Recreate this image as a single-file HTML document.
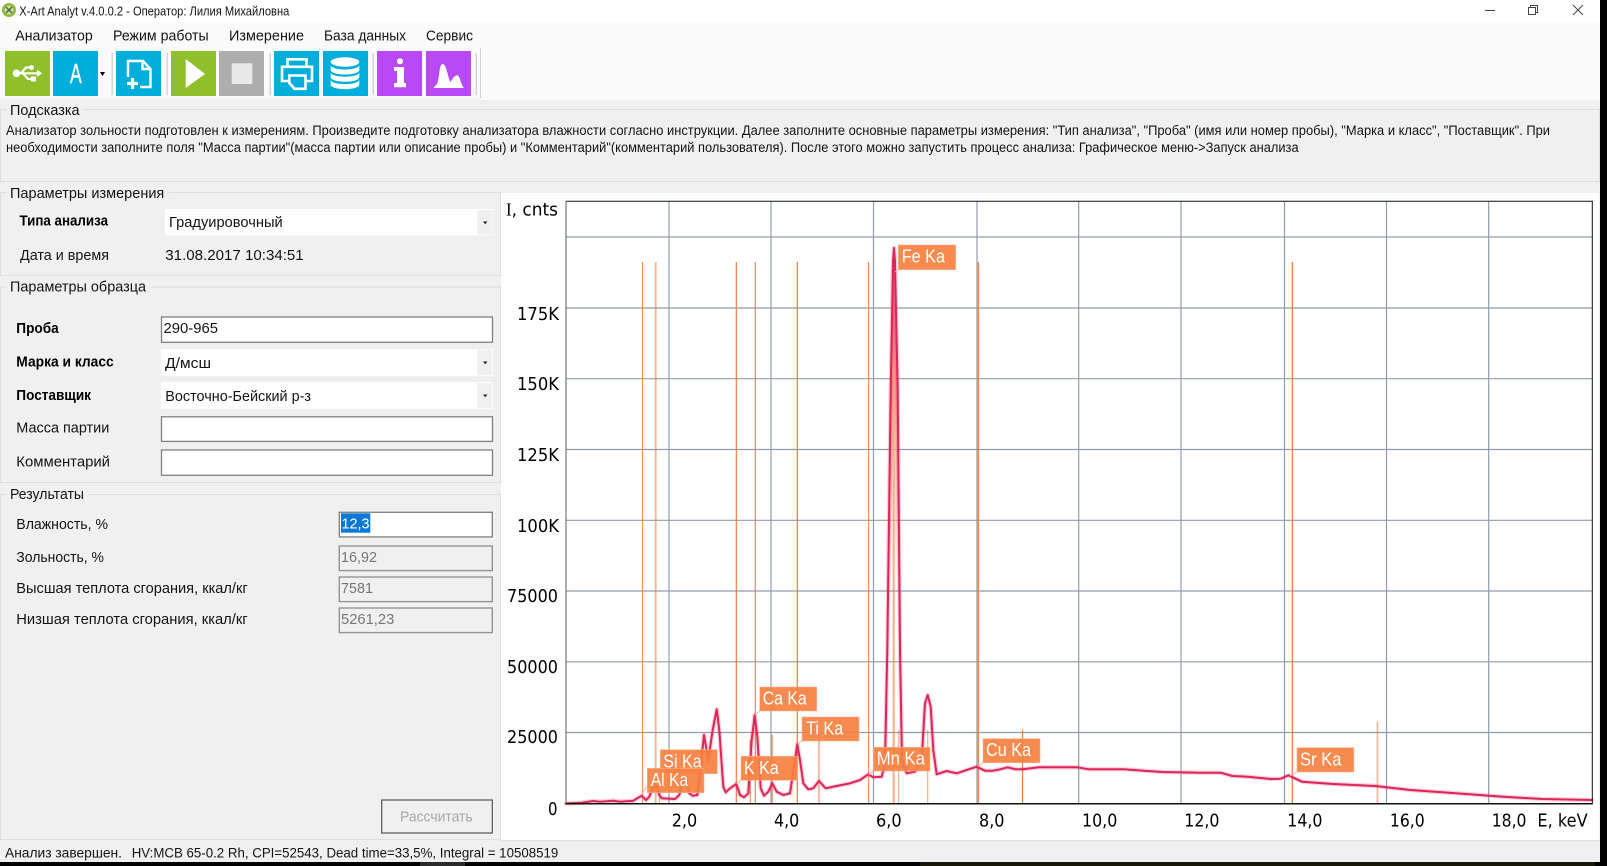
<!DOCTYPE html>
<html lang="ru">
<head>
<meta charset="utf-8">
<title>X-Art Analyt</title>
<style>
html,body{margin:0;padding:0;width:1607px;height:866px;background:#000;overflow:hidden}
svg{display:block;filter:blur(.35px)}
text{font-family:"Liberation Sans","Noto Sans CJK SC",sans-serif;font-size:14.5px;fill:#141414}
.s{font-size:13.5px;fill:#141414}
.b{font-weight:bold;font-size:14.5px;fill:#000}
.d{fill:#777}
.c{font-family:"DejaVu Sans",sans-serif;font-size:17.5px;fill:#000}
.l{font-size:18px;fill:#fff}
.grid line{stroke:#8f9cae;stroke-width:1.2}
.ol line{stroke:#f2783c;stroke-width:1.2}
.gb{fill:#f0f0f0;stroke:#dedede;stroke-width:1}
.lab rect{fill:#f6803f;fill-opacity:.92;stroke:#fbb48e;stroke-width:.6}
.con line{stroke:#fbb48e;stroke-width:1}
.w{fill:#fff;stroke:#808080;stroke-width:1.3}
.dis{fill:#f0f0f0;stroke:#949494;stroke-width:1.4}
</style>
</head>
<body>
<svg xmlns="http://www.w3.org/2000/svg" width="1607" height="866" viewBox="0 0 1607 866">
<defs>
<linearGradient id="fe" gradientUnits="userSpaceOnUse" x1="0" y1="248" x2="0" y2="600">
<stop offset="0" stop-color="#e8507a"/>
<stop offset=".45" stop-color="#f4a98a"/>
<stop offset="1" stop-color="#f7c8b0" stop-opacity="0"/>
</linearGradient>
</defs>
<rect width="1607" height="866" fill="#000"/>
<rect x="920" y="862" width="675" height="4" fill="#171708"/>
<rect x="420" y="862" width="45" height="4" fill="#2b2b2b"/>
<rect x="0" y="0" width="1600" height="862" fill="#f0f0f0"/>

<!-- title bar -->
<rect x="0" y="0" width="1600" height="22" fill="#fff"/>
<circle cx="9" cy="10" r="7" fill="#8dbb3c"/>
<circle cx="9" cy="10" r="4.4" fill="#cfdcb8"/>
<path d="M6 7L12 13M12 7L6 13" stroke="#4c6d2a" stroke-width="1.5"/>
<text x="19.3" y="15.5" style="font-size:12.5px" textLength="270" lengthAdjust="spacingAndGlyphs">X-Art Analyt v.4.0.0.2 - Оператор: Лилия Михайловна</text>
<path d="M1485 10.5H1495" stroke="#444" stroke-width="1"/>
<path d="M1528.5 7.5h7v7h-7zM1530.5 7.5v-2h7v7h-2" fill="none" stroke="#444" stroke-width="1"/>
<path d="M1573 5L1583 15M1583 5L1573 15" stroke="#444" stroke-width="1"/>

<!-- menu + toolbar bg -->
<rect x="0" y="22" width="1600" height="78" fill="#fafafa"/>
<rect x="480" y="48" width="1" height="50" fill="#d2d2d2"/>
<rect x="0" y="98" width="480" height="2" fill="#f3f3f3"/>
<text x="15.3" y="40.7" textLength="77.4" lengthAdjust="spacingAndGlyphs">Анализатор</text>
<text x="113" y="40.7" textLength="95.7" lengthAdjust="spacingAndGlyphs">Режим работы</text>
<text x="229" y="40.7" textLength="75" lengthAdjust="spacingAndGlyphs">Измерение</text>
<text x="324" y="40.7" textLength="82" lengthAdjust="spacingAndGlyphs">База данных</text>
<text x="426" y="40.7" textLength="47" lengthAdjust="spacingAndGlyphs">Сервис</text>

<!-- toolbar -->
<g>
<rect x="5" y="51" width="45" height="45" fill="#8fbf2b"/>
<rect x="53" y="51" width="45" height="45" fill="#00aedb"/>
<rect x="116" y="51" width="45" height="45" fill="#00aedb"/>
<rect x="171" y="51" width="45" height="45" fill="#8fbf2b"/>
<rect x="219" y="51" width="45" height="45" fill="#adadad"/>
<rect x="274" y="51" width="45" height="45" fill="#00aedb"/>
<rect x="323" y="51" width="45" height="45" fill="#00aedb"/>
<rect x="377" y="51" width="45" height="45" fill="#b948f6"/>
<rect x="426" y="51" width="45" height="45" fill="#b948f6"/>
<g fill="#d6d6d6">
<rect x="111.5" y="53" width="1.5" height="42"/>
<rect x="166.5" y="53" width="1.5" height="42"/>
<rect x="269.5" y="53" width="1.5" height="42"/>
<rect x="372.5" y="53" width="1.5" height="42"/>
<rect x="475.5" y="53" width="1.5" height="42"/>
</g>
<!-- usb -->
<g fill="#fff" stroke="none">
<circle cx="16.5" cy="73.3" r="3.8"/>
<path d="M37 69.6L42 73.3L37 77Z"/>
<circle cx="31.5" cy="67.5" r="2.4"/>
<rect x="31" y="76.5" width="5" height="5"/>
</g>
<path d="M16 73.3H38M21 73.3L26 67.5H30M23 73.3L28 79H32" fill="none" stroke="#fff" stroke-width="2.2"/>
<text x="70" y="83" style="font-size:28px;fill:#fff;stroke:#fff;stroke-width:.5" textLength="11.7" lengthAdjust="spacingAndGlyphs">A</text>
<path d="M100 72H105L102.5 76Z" fill="#000"/>
<!-- new doc -->
<path d="M128 77V61H143L150.5 69V87H140M142.5 61V69H150.5" fill="none" stroke="#fff" stroke-width="2.4"/>
<path d="M127 83.5H138M132.5 78V89" fill="none" stroke="#fff" stroke-width="3.2"/>
<!-- play/stop -->
<path d="M185.7 59L205 74L185.7 88Z" fill="#fff"/>
<rect x="231.7" y="63.3" width="20.6" height="20.7" fill="#e8e8e8"/>
<!-- printer -->
<path d="M287.5 66V59.3H306.5V66M288 81H282V66.8H312V81H306M289.3 75.5H305.5V88.8H294.5L289.3 83Z" fill="none" stroke="#fff" stroke-width="2.6"/>
<!-- database -->
<g fill="#fff">
<ellipse cx="345" cy="62" rx="14.3" ry="4.8"/>
<path d="M330.7 65c0 2.5 6 4.5 14.3 4.5s14.3-2 14.3-4.5v5c0 2.5-6 4.5-14.3 4.5s-14.3-2-14.3-4.5z"/>
<path d="M330.7 72.3c0 2.5 6 4.5 14.3 4.5s14.3-2 14.3-4.5v5c0 2.5-6 4.5-14.3 4.5s-14.3-2-14.3-4.5z"/>
<path d="M330.7 79.6c0 2.5 6 4.5 14.3 4.5s14.3-2 14.3-4.5v5c0 2.5-6 4.5-14.3 4.5s-14.3-2-14.3-4.5z"/>
</g>
<!-- info -->
<circle cx="400" cy="61.3" r="3" fill="#fff"/>
<path d="M394 67H404V83H406V87.3H394V83H397V71H394Z" fill="#fff"/>
<!-- peaks -->
<path d="M433.3 88L437 84C439.5 79 439 64 442.5 64C447 64 447.5 78 450.7 82C452.5 78.5 455 75.3 457.3 75.3C460 75.3 460.5 84 464 88Z" fill="#fff"/>
</g>

<!-- hint -->
<rect x="0.5" y="109.5" width="1599" height="72" class="gb"/>
<rect x="6" y="105" width="77" height="8" fill="#f0f0f0"/>
<text x="10" y="115" textLength="69.5" lengthAdjust="spacingAndGlyphs">Подсказка</text>
<text class="s" x="6" y="135" textLength="1544" lengthAdjust="spacingAndGlyphs">Анализатор зольности подготовлен к измерениям. Произведите подготовку анализатора влажности согласно инструкции. Далее заполните основные параметры измерения: "Тип анализа", "Проба" (имя или номер пробы), "Марка и класс", "Поставщик". При</text>
<text class="s" x="6" y="152" textLength="1292.6" lengthAdjust="spacingAndGlyphs">необходимости заполните поля "Масса партии"(масса партии или описание пробы) и "Комментарий"(комментарий пользователя). После этого можно запустить процесс анализа: Графическое меню-&gt;Запуск анализа</text>

<!-- group 1 -->
<rect x="0.5" y="192.5" width="500" height="83" class="gb"/>
<rect x="6" y="188" width="163" height="8" fill="#f0f0f0"/>
<text x="10" y="198" textLength="154.3" lengthAdjust="spacingAndGlyphs">Параметры измерения</text>
<text class="b" x="19.5" y="225.7" textLength="88.5" lengthAdjust="spacingAndGlyphs">Типа анализа</text>
<rect x="165" y="209" width="327.7" height="26.3" fill="#fff"/>
<rect x="477.3" y="209.8" width="15" height="24.8" fill="#f0f0f0"/>
<path d="M483 221.5H487.5L485.2 224.2Z" fill="#222"/>
<text x="169" y="227" textLength="113.7" lengthAdjust="spacingAndGlyphs">Градуировочный</text>
<text x="20" y="260" textLength="89" lengthAdjust="spacingAndGlyphs">Дата и время</text>
<text x="165.3" y="260" textLength="138.4" lengthAdjust="spacingAndGlyphs">31.08.2017 10:34:51</text>

<!-- group 2 -->
<rect x="0.5" y="287" width="500" height="195.5" class="gb"/>
<rect x="6" y="283" width="144" height="8" fill="#f0f0f0"/>
<text x="10" y="291.7" textLength="136" lengthAdjust="spacingAndGlyphs">Параметры образца</text>
<text class="b" x="16.3" y="333" textLength="42.4" lengthAdjust="spacingAndGlyphs">Проба</text>
<rect x="161.5" y="317" width="331" height="25.3" class="w"/>
<text x="163.5" y="333" textLength="54.5" lengthAdjust="spacingAndGlyphs">290-965</text>
<text class="b" x="16.3" y="366.7" textLength="97.4" lengthAdjust="spacingAndGlyphs">Марка и класс</text>
<rect x="161" y="349.3" width="332" height="26.7" fill="#fff"/>
<rect x="477.3" y="350" width="15" height="25.3" fill="#f0f0f0"/>
<path d="M483 361.5H487.5L485.2 364.2Z" fill="#222"/>
<text x="165" y="368" textLength="46" lengthAdjust="spacingAndGlyphs">Д/мсш</text>
<text class="b" x="16.3" y="400" textLength="74.7" lengthAdjust="spacingAndGlyphs">Поставщик</text>
<rect x="161" y="382" width="332" height="26.7" fill="#fff"/>
<rect x="477.3" y="382.8" width="15" height="25.2" fill="#f0f0f0"/>
<path d="M483 394.5H487.5L485.2 397.2Z" fill="#222"/>
<text x="165.3" y="401" textLength="145.7" lengthAdjust="spacingAndGlyphs">Восточно-Бейский р-з</text>
<text x="16.3" y="432.7" textLength="93" lengthAdjust="spacingAndGlyphs">Масса партии</text>
<rect x="161.5" y="416.8" width="331" height="24.6" class="w"/>
<text x="16.3" y="466.7" textLength="93.7" lengthAdjust="spacingAndGlyphs">Комментарий</text>
<rect x="161.5" y="450" width="331" height="25.3" class="w"/>

<!-- group 3 -->
<rect x="0.5" y="494.5" width="500" height="345" class="gb"/>
<rect x="6" y="490" width="82" height="8" fill="#f0f0f0"/>
<text x="10" y="499" textLength="74" lengthAdjust="spacingAndGlyphs">Результаты</text>
<text x="16.3" y="529" textLength="91.7" lengthAdjust="spacingAndGlyphs">Влажность, %</text>
<rect x="339.3" y="512.3" width="153" height="24.6" class="w"/>
<rect x="341" y="513.3" width="29.3" height="19.4" fill="#0a78d7"/>
<text x="341.5" y="528.5" style="fill:#fff" textLength="28" lengthAdjust="spacingAndGlyphs">12,3</text>
<text x="16.3" y="562" textLength="87.7" lengthAdjust="spacingAndGlyphs">Зольность, %</text>
<rect x="339.3" y="546" width="153" height="24.6" class="dis"/>
<text class="d" x="341" y="562" textLength="36" lengthAdjust="spacingAndGlyphs">16,92</text>
<text x="16.3" y="593" textLength="231.4" lengthAdjust="spacingAndGlyphs">Высшая теплота сгорания, ккал/кг</text>
<rect x="339.3" y="577" width="153" height="24.6" class="dis"/>
<text class="d" x="341" y="593" textLength="32" lengthAdjust="spacingAndGlyphs">7581</text>
<text x="16.3" y="624" textLength="231.4" lengthAdjust="spacingAndGlyphs">Низшая теплота сгорания, ккал/кг</text>
<rect x="339.3" y="608" width="153" height="24.6" class="dis"/>
<text class="d" x="341" y="624" textLength="53.3" lengthAdjust="spacingAndGlyphs">5261,23</text>
<rect x="381.7" y="800" width="110.6" height="33" fill="#f0f0f0" stroke="#555" stroke-width="1.2"/>
<text x="400" y="821.7" style="fill:#a8a8a8" textLength="72.7" lengthAdjust="spacingAndGlyphs">Рассчитать</text>

<!-- status bar -->
<rect x="0" y="841" width="1600" height="21" fill="#f0f0f0"/>
<text class="s" x="5" y="857.3" textLength="117" lengthAdjust="spacingAndGlyphs">Анализ завершен.</text>
<text class="s" x="131.7" y="857.3" textLength="426.6" lengthAdjust="spacingAndGlyphs">HV:MCB 65-0.2 Rh, CPI=52543, Dead time=33,5%, Integral = 10508519</text>

<!-- chart -->
<rect x="501" y="193" width="1098" height="648" fill="#fff"/>
<rect x="501" y="840" width="1099" height="1.5" fill="#e2e2e2"/>
<g class="grid">
<line x1="669" y1="201" x2="669" y2="804"/>
<line x1="771" y1="201" x2="771" y2="804"/>
<line x1="873.5" y1="201" x2="873.5" y2="804"/>
<line x1="977" y1="201" x2="977" y2="804"/>
<line x1="1078.7" y1="201" x2="1078.7" y2="804"/>
<line x1="1181" y1="201" x2="1181" y2="804"/>
<line x1="1284.5" y1="201" x2="1284.5" y2="804"/>
<line x1="1386.5" y1="201" x2="1386.5" y2="804"/>
<line x1="1488.7" y1="201" x2="1488.7" y2="804"/>
<line x1="566" y1="237" x2="1592" y2="237"/>
<line x1="566" y1="308" x2="1592" y2="308"/>
<line x1="566" y1="378.7" x2="1592" y2="378.7"/>
<line x1="566" y1="449.5" x2="1592" y2="449.5"/>
<line x1="566" y1="520.3" x2="1592" y2="520.3"/>
<line x1="566" y1="591" x2="1592" y2="591"/>
<line x1="566" y1="661.8" x2="1592" y2="661.8"/>
<line x1="566" y1="732.5" x2="1592" y2="732.5"/>
</g>
<g class="ol">
<line x1="642.5" y1="262" x2="642.5" y2="804" opacity=".8"/>
<line x1="655.7" y1="262" x2="655.7" y2="804" opacity=".55" style="stroke-width:1.8"/>
<line x1="659.4" y1="793" x2="659.4" y2="804" opacity=".6"/>
<line x1="736.3" y1="262" x2="736.3" y2="804"/>
<line x1="750.3" y1="740" x2="750.3" y2="804" opacity=".8"/>
<line x1="755.3" y1="262" x2="755.3" y2="804" opacity=".9"/>
<line x1="772.2" y1="735" x2="772.2" y2="804" opacity=".8"/>
<line x1="797.3" y1="262" x2="797.3" y2="804"/>
<line x1="819" y1="735" x2="819" y2="804" opacity=".55" style="stroke-width:1.8"/>
<line x1="868.6" y1="262" x2="868.6" y2="804" opacity=".8"/>
<line x1="893.7" y1="262" x2="893.7" y2="804" opacity=".6" style="stroke-width:2"/>
<line x1="898.7" y1="730" x2="898.7" y2="804" opacity=".6"/>
<line x1="927.7" y1="730" x2="927.7" y2="804" opacity=".6"/>
<line x1="978.3" y1="262" x2="978.3" y2="804"/>
<line x1="1022.5" y1="730" x2="1022.5" y2="804"/>
<line x1="1292.3" y1="262" x2="1292.3" y2="804"/>
<line x1="1377.5" y1="721.5" x2="1377.5" y2="804" opacity=".55" style="stroke-width:1.6"/>
</g>
<path d="M894 248L890.7 390L888.2 600H899.4L897.7 390Z" fill="url(#fe)"/>
<g fill="none" stroke-linejoin="round" stroke-linecap="round">
<polyline stroke="#e4336a" stroke-opacity=".24" stroke-width="4.4" points="566,803.5 581.7,802.7 593.3,801 600,801.7 613.3,800.7 620,801.7 633.3,800.7 641.7,795.7 646,800 649.3,796.7 653.3,786.7 656.7,786 659.3,795 661.7,798.3 675,799 679.3,795 683.3,780 686.7,780 689.3,793.3 692.7,795.7 697.3,795 700,773.3 704,735 708.3,760 712.7,730 716.7,709.3 719.3,730 723.3,786.7 725.7,792.3 730,788.3 736.3,784 740,795 744,797.3 748.3,793.3 751.7,740 754.7,715 757.3,736.7 760.7,788.3 764,795.7 768.3,791.7 772.3,783.3 776.7,791.7 783.3,795 790,793.3 794,766.7 797.3,744 800,760 803.3,783.3 808.3,789.3 813.3,788.3 819,781 825.7,788.3 836.7,786 850,783.3 860,780 868.3,774.3 873.3,777.3 881.7,776.7 885,763 887.3,650 890.7,390 893,262 894,248 895,262 897.7,390 900,650 902,760 906.7,773.3 915,771.7 921.7,760 925,703.3 927.7,695 930.7,706.7 933.3,750 936.7,774.3 946.7,771 956.7,773.3 976.7,766.7 985,770.7 993.3,770.7 1000,769.3 1007.7,767.3 1015.5,769.3 1023,769.3 1038.7,767.3 1058,767.3 1077.4,767.3 1089,769.3 1123.9,769.3 1147,771 1162.6,772 1201.3,772.7 1220.7,772.7 1232.3,776 1247.8,776.7 1271,779 1280.7,778.7 1288.4,775.3 1302,781.7 1333,784 1375.5,786 1410.4,790 1449,792.7 1503.3,796.7 1542,799 1592,800"/>
<polyline stroke="#dc2558" stroke-width="2" points="566,803.5 581.7,802.7 593.3,801 600,801.7 613.3,800.7 620,801.7 633.3,800.7 641.7,795.7 646,800 649.3,796.7 653.3,786.7 656.7,786 659.3,795 661.7,798.3 675,799 679.3,795 683.3,780 686.7,780 689.3,793.3 692.7,795.7 697.3,795 700,773.3 704,735 708.3,760 712.7,730 716.7,709.3 719.3,730 723.3,786.7 725.7,792.3 730,788.3 736.3,784 740,795 744,797.3 748.3,793.3 751.7,740 754.7,715 757.3,736.7 760.7,788.3 764,795.7 768.3,791.7 772.3,783.3 776.7,791.7 783.3,795 790,793.3 794,766.7 797.3,744 800,760 803.3,783.3 808.3,789.3 813.3,788.3 819,781 825.7,788.3 836.7,786 850,783.3 860,780 868.3,774.3 873.3,777.3 881.7,776.7 885,763 887.3,650 890.7,390 893,262 894,248 895,262 897.7,390 900,650 902,760 906.7,773.3 915,771.7 921.7,760 925,703.3 927.7,695 930.7,706.7 933.3,750 936.7,774.3 946.7,771 956.7,773.3 976.7,766.7 985,770.7 993.3,770.7 1000,769.3 1007.7,767.3 1015.5,769.3 1023,769.3 1038.7,767.3 1058,767.3 1077.4,767.3 1089,769.3 1123.9,769.3 1147,771 1162.6,772 1201.3,772.7 1220.7,772.7 1232.3,776 1247.8,776.7 1271,779 1280.7,778.7 1288.4,775.3 1302,781.7 1333,784 1375.5,786 1410.4,790 1449,792.7 1503.3,796.7 1542,799 1592,800"/>
</g>
<!-- plot border -->
<path d="M566 201.3H1592.3V803.7" fill="none" stroke="#111" stroke-width="1"/>
<path d="M566 201V804" fill="none" stroke="#777" stroke-width="1.2"/>
<path d="M565.5 803.7H1592.8" fill="none" stroke="#111" stroke-width="1.5"/>

<!-- axis labels -->
<text class="c" x="506" y="215.5" textLength="52" lengthAdjust="spacingAndGlyphs"><tspan style="font-family:'Liberation Serif',serif">I</tspan>, cnts</text>
<text class="c" x="517" y="320" textLength="42" lengthAdjust="spacingAndGlyphs">175K</text>
<text class="c" x="517" y="390" textLength="42" lengthAdjust="spacingAndGlyphs">150K</text>
<text class="c" x="517" y="461" textLength="42" lengthAdjust="spacingAndGlyphs">125K</text>
<text class="c" x="517" y="532" textLength="42" lengthAdjust="spacingAndGlyphs">100K</text>
<text class="c" x="507" y="602" textLength="51" lengthAdjust="spacingAndGlyphs">75000</text>
<text class="c" x="507" y="673" textLength="51" lengthAdjust="spacingAndGlyphs">50000</text>
<text class="c" x="507" y="743" textLength="51" lengthAdjust="spacingAndGlyphs">25000</text>
<text class="c" x="548" y="815" textLength="9.5" lengthAdjust="spacingAndGlyphs">0</text>
<text class="c" x="671.7" y="826.7" textLength="25.5" lengthAdjust="spacingAndGlyphs">2,0</text>
<text class="c" x="774" y="826.7" textLength="25.3" lengthAdjust="spacingAndGlyphs">4,0</text>
<text class="c" x="876" y="826.7" textLength="25.7" lengthAdjust="spacingAndGlyphs">6,0</text>
<text class="c" x="979" y="826.7" textLength="25.5" lengthAdjust="spacingAndGlyphs">8,0</text>
<text class="c" x="1082" y="826.7" textLength="35.3" lengthAdjust="spacingAndGlyphs">10,0</text>
<text class="c" x="1184.3" y="826.7" textLength="35.2" lengthAdjust="spacingAndGlyphs">12,0</text>
<text class="c" x="1287.3" y="826.7" textLength="35.2" lengthAdjust="spacingAndGlyphs">14,0</text>
<text class="c" x="1389.9" y="826.7" textLength="34.8" lengthAdjust="spacingAndGlyphs">16,0</text>
<text class="c" x="1491.7" y="826.7" textLength="34.8" lengthAdjust="spacingAndGlyphs">18,0</text>
<text class="c" x="1537.4" y="826.7" textLength="50.3" lengthAdjust="spacingAndGlyphs">E, keV</text>

<!-- peak labels -->
<g class="con">
<line x1="647.3" y1="786" x2="641.5" y2="795"/>
<line x1="741" y1="780" x2="736.5" y2="784"/>
<line x1="759.7" y1="711" x2="755" y2="715"/>
<line x1="802" y1="741" x2="797.5" y2="744"/>
<line x1="873.3" y1="771" x2="868.5" y2="775"/>
<line x1="983" y1="762.7" x2="978" y2="766.5"/>
<line x1="1297" y1="772" x2="1290" y2="776"/>
<line x1="898.3" y1="269.7" x2="895" y2="272"/>
</g>
<g class="lab">
<rect x="660.3" y="749.7" width="57" height="24"/>
<text class="l" x="663.3" y="767.3" textLength="38.4" lengthAdjust="spacingAndGlyphs">Si Ka</text>
<rect x="647.3" y="768.3" width="56.7" height="24.4"/>
<text class="l" x="650.7" y="786" textLength="37.6" lengthAdjust="spacingAndGlyphs">Al Ka</text>
<rect x="741" y="756.3" width="56.7" height="24"/>
<text class="l" x="744" y="774" textLength="34.7" lengthAdjust="spacingAndGlyphs">K Ka</text>
<rect x="759.7" y="687" width="57" height="24"/>
<text class="l" x="762.7" y="704.3" textLength="44" lengthAdjust="spacingAndGlyphs">Ca Ka</text>
<rect x="802" y="717" width="57" height="24"/>
<text class="l" x="806" y="734.3" textLength="37.3" lengthAdjust="spacingAndGlyphs">Ti Ka</text>
<rect x="873.3" y="747.3" width="56.7" height="23.7"/>
<text class="l" x="876.7" y="764.7" textLength="48.3" lengthAdjust="spacingAndGlyphs">Mn Ka</text>
<rect x="983" y="738.7" width="57" height="24"/>
<text class="l" x="986" y="756" textLength="45" lengthAdjust="spacingAndGlyphs">Cu Ka</text>
<rect x="1297" y="747.7" width="56.8" height="24.3"/>
<text class="l" x="1300" y="765.7" textLength="41.5" lengthAdjust="spacingAndGlyphs">Sr Ka</text>
<rect x="898.3" y="245" width="57.4" height="24.7"/>
<text class="l" x="901.7" y="262.7" textLength="43.3" lengthAdjust="spacingAndGlyphs">Fe Ka</text>
</g>
</svg>
</body>
</html>
